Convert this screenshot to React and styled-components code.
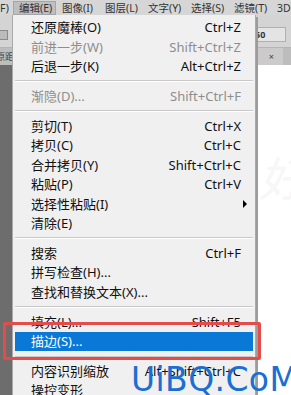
import React from "react";
import styled, { createGlobalStyle } from "styled-components";

const Global = createGlobalStyle`
  html, body { margin: 0; padding: 0; background: #ffffff; }
  body { width: 291px; height: 395px; overflow: hidden; }
`;

const Page = styled.div`
  position: relative;
  width: 291px;
  height: 395px;
  overflow: hidden;
  display: grid;
  grid-template-rows: 15px 33px 17px 1fr;
  font-family: "Noto Sans", "Noto Sans CJK SC", sans-serif;
`;

const MenuBar = styled.div`
  background: #d6d6d6;
  display: flex;
  align-items: center;
  font-size: 10.5px;
  color: #333333;
  white-space: nowrap;
  overflow: hidden;
`;

const BarItem = styled.div`
  flex: none;
  width: ${(p) => p.$w || 43}px;
  height: 14px;
  padding-left: ${(p) => (p.$first ? 0 : 5)}px;
  box-sizing: border-box;
  background: ${(p) => (p.$active ? "#bfbfbf" : "transparent")};
  border: 1px solid ${(p) => (p.$active ? "#a6a6a6" : "transparent")};
  border-left-width: ${(p) => (p.$first ? 0 : 1)}px;
  display: flex;
  align-items: center;
`;

const ToolBar = styled.div`
  background: #d4d4d4;
  border-bottom: 1px solid #b4b4b4;
  display: flex;
  align-items: flex-start;
  justify-content: space-between;
  padding-top: 15px;
  box-sizing: border-box;
`;

const Check = styled.div`
  width: 7px;
  height: 8px;
  border: 1px solid #8a8a8a;
  background: #bcbcbc;
  margin-left: -1px;
`;

const Field = styled.div`
  width: 30px;
  height: 13px;
  margin-top: -3px;
  margin-right: 5px;
  background: #e4e4e4;
  border: 1px solid #b0b0b0;
  font-size: 9px;
  font-weight: bold;
  color: #333;
  line-height: 13px;
  padding-left: 1px;
  box-sizing: content-box;
`;

const TabBar = styled.div`
  background: #a9a9a9;
  display: flex;
  justify-content: space-between;
`;

const Tab = styled.div`
  background: ${(p) => (p.$light ? "#cbcbcb" : "#bdbdbd")};
  width: ${(p) => p.$w}px;
  font-size: 9px;
  color: #444;
  display: flex;
  align-items: center;
  justify-content: ${(p) => (p.$end ? "flex-end" : "center")};
  padding-right: ${(p) => p.$pr || 0}px;
  overflow: hidden;
  white-space: nowrap;
`;

const Spacer = styled.div`
  flex: 1;
`;

const Workspace = styled.div`
  display: grid;
  grid-template-columns: 140px 1fr;
`;

const DarkPane = styled.div`
  background: #6d6d6d;
`;

const Canvas = styled.div`
  background: #ffffff;
  position: relative;
  overflow: hidden;
`;

const Ghost = styled.div`
  position: absolute;
  right: -14px;
  top: 78px;
  font-size: 46px;
  font-style: italic;
  font-family: "Noto Sans CJK SC", sans-serif;
  color: #f7f7f7;
`;

const Menu = styled.div`
  position: absolute;
  left: 12px;
  top: 15px;
  width: 244px;
  box-sizing: border-box;
  background: #f0f0f0;
  border: 1px solid #a9a9a9;
  border-top: none;
  box-shadow: 2px 2px 0 #9c9c9c;
  padding: 3px 2px 0 2px;
  font-size: 13px;
  height: 400px;
`;

const Item = styled.div`
  position: relative;
  height: 19.4px;
  display: flex;
  align-items: center;
  justify-content: space-between;
  padding: 0 12px 0 16px;
  color: ${(p) => (p.$selected ? "#ffffff" : p.$disabled ? "#8e8e8e" : "#101010")};
  background: ${(p) => (p.$selected ? "#0a78d7" : "transparent")};
  white-space: nowrap;
  line-height: 1;
`;

const Shortcut = styled.span`
  letter-spacing: 0;
`;

const Arrow = styled.span`
  position: absolute;
  right: 6px;
  top: 6px;
  width: 0;
  height: 0;
  border-top: 4px solid transparent;
  border-bottom: 4px solid transparent;
  border-left: 4px solid #000;
`;

const Sep = styled.div`
  height: 10.6px;
  display: flex;
  align-items: center;
  &::after {
    content: "";
    flex: 1;
    height: 0;
    border-top: 1px solid #c8c8c8;
    border-bottom: 1px solid #ffffff;
  }
`;

const Annotation = styled.div`
  position: absolute;
  left: 3px;
  top: 322px;
  width: 258px;
  height: 38px;
  box-sizing: border-box;
  border: 3px solid #e44c4c;
  border-radius: 2px;
`;

const Watermark = styled.div`
  position: absolute;
  left: 131px;
  top: 363px;
  font-family: "DejaVu Sans", sans-serif;
  font-size: 33px;
  letter-spacing: 0.4px;
  line-height: 1;
  color: #1b6fd2;
  white-space: nowrap;
`;

const menu = [
  { t: "还原魔棒(O)", k: "Ctrl+Z" },
  { t: "前进一步(W)", k: "Shift+Ctrl+Z", d: true },
  { t: "后退一步(K)", k: "Alt+Ctrl+Z" },
  { sep: true },
  { t: "渐隐(D)...", k: "Shift+Ctrl+F", d: true },
  { sep: true },
  { t: "剪切(T)", k: "Ctrl+X" },
  { t: "拷贝(C)", k: "Ctrl+C" },
  { t: "合并拷贝(Y)", k: "Shift+Ctrl+C" },
  { t: "粘贴(P)", k: "Ctrl+V" },
  { t: "选择性粘贴(I)", sub: true },
  { t: "清除(E)" },
  { sep: true },
  { t: "搜索", k: "Ctrl+F" },
  { t: "拼写检查(H)..." },
  { t: "查找和替换文本(X)..." },
  { sep: true },
  { t: "填充(L)...", k: "Shift+F5" },
  { t: "描边(S)...", sel: true },
  { sep: true },
  { t: "内容识别缩放", k: "Alt+Shift+Ctrl+C" },
  { t: "操控变形" },
];

const bar = ["图像(I)", "图层(L)", "文字(Y)", "选择(S)", "滤镜(T)", "3D"];

export default function App() {
  return (
    <>
      <Global />
      <Page>
        <MenuBar>
          <BarItem $first $w={13}>F)</BarItem>
          <BarItem $active>编辑(E)</BarItem>
          {bar.map((b) => (
            <BarItem key={b}>{b}</BarItem>
          ))}
        </MenuBar>
        <ToolBar>
          <Check />
          <Field>50</Field>
        </ToolBar>
        <TabBar>
          <Tab $w={14} $end>原距</Tab>
          <Spacer />
          <Tab $light $w={27} $end $pr={9}>×</Tab>
          <Tab $w={8} />
        </TabBar>
        <Workspace>
          <DarkPane />
          <Canvas>
            <Ghost>好</Ghost>
          </Canvas>
        </Workspace>

        <Menu>
          {menu.map((m, i) =>
            m.sep ? (
              <Sep key={i} />
            ) : (
              <Item key={i} $disabled={m.d} $selected={m.sel}>
                <span>{m.t}</span>
                {m.k && <Shortcut>{m.k}</Shortcut>}
                {m.sub && <Arrow />}
              </Item>
            )
          )}
        </Menu>
        <Annotation />
        <Watermark>UiBQ.CoM</Watermark>
      </Page>
    </>
  );
}
